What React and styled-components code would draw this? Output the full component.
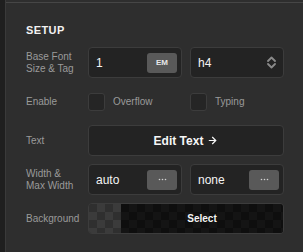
import React from "react"
import styled, { createGlobalStyle } from "styled-components"
import { ArrowRight } from "lucide-react"

const Global = createGlobalStyle`
    body {
        margin: 0;
        background: #1e1e1e;
        font-family: "Liberation Sans", Arial, sans-serif;
    }
`

function Chevrons() {
    return (
        <svg width="9" height="13" viewBox="0 0 9 13" fill="none">
            <path d="M1 5 L4.5 1.5 L8 5" stroke="#8a8a8a" strokeWidth="1.8" strokeLinecap="round" strokeLinejoin="round" />
            <path d="M1 8 L4.5 11.5 L8 8" stroke="#8a8a8a" strokeWidth="1.8" strokeLinecap="round" strokeLinejoin="round" />
        </svg>
    )
}

function Dots() {
    return (
        <svg width="9" height="3" viewBox="0 0 9 3">
            <circle cx="1.5" cy="1.5" r="0.8" fill="#d0d0d0" />
            <circle cx="4.5" cy="1.5" r="0.8" fill="#d0d0d0" />
            <circle cx="7.5" cy="1.5" r="0.8" fill="#d0d0d0" />
        </svg>
    )
}

function App() {
    return (
        <Page>
            <Global />
            <Strip />
            <Panel>
                <Divider />
                <Title>Setup</Title>
                <Grid>
                    <Label>Base Font<br />Size &amp; Tag</Label>
                    <Field>
                        <Value>1</Value>
                        <Pill>EM</Pill>
                    </Field>
                    <Field>
                        <Value>h4</Value>
                        <IconSlot><Chevrons /></IconSlot>
                    </Field>

                    <Label>Enable</Label>
                    <Check>
                        <Box />
                        <span>Overflow</span>
                    </Check>
                    <Check>
                        <Box />
                        <span>Typing</span>
                    </Check>

                    <Label>Text</Label>
                    <WideButton>
                        Edit Text <ArrowRight size={11} strokeWidth={2.6} />
                    </WideButton>

                    <Label>Width &amp;<br />Max Width</Label>
                    <Field>
                        <Value>auto</Value>
                        <Pill><Dots /></Pill>
                    </Field>
                    <Field>
                        <Value>none</Value>
                        <Pill><Dots /></Pill>
                    </Field>

                    <Label>Background</Label>
                    <Swatch>
                        <Checker />
                        <SelectArea>Select</SelectArea>
                    </Swatch>
                </Grid>
            </Panel>
        </Page>
    )
}

export default App

const Page = styled.div`
    display: flex;
    width: 303px;
    height: 252px;
    overflow: hidden;
`

const Strip = styled.div`
    width: 5px;
    flex-shrink: 0;
    background: #1f1f1f;
`

const Panel = styled.div`
    flex: 1;
    background: #2e2e2e;
    border-left: 1px solid #3a3a3a;
    padding: 2px 19px 0 20px;
`

const Divider = styled.div`
    height: 1px;
    background: #464646;
    margin: 0 -19px 0 -20px;
`

const Title = styled.div`
    margin-top: 21px;
    font-size: 11px;
    line-height: 13px;
    font-weight: 700;
    letter-spacing: 0.4px;
    text-transform: uppercase;
    color: #f2f2f2;
`

const Grid = styled.div`
    margin-top: 10px;
    display: grid;
    grid-template-columns: 54px 94px 94px;
    grid-auto-rows: 31px;
    column-gap: 8px;
    row-gap: 8px;
`

const Label = styled.div`
    display: flex;
    align-items: center;
    font-size: 10px;
    line-height: 12px;
    color: #9a9a9a;
    white-space: nowrap;
`

const Field = styled.div`
    display: flex;
    align-items: center;
    justify-content: space-between;
    box-sizing: border-box;
    background: #232323;
    border: 1px solid #3c3c3c;
    border-radius: 4px;
    padding: 0 4px 0 7px;
`

const Value = styled.span`
    font-size: 12px;
    color: #f4f4f4;
`

const Pill = styled.div`
    width: 30px;
    height: 20px;
    border-radius: 3px;
    background: #595959;
    color: #e8e8e8;
    font-size: 8px;
    font-weight: 700;
    display: flex;
    align-items: center;
    justify-content: center;
`

const IconSlot = styled.div`
    display: flex;
    align-items: center;
    padding-right: 3px;
`

const Check = styled.label`
    display: flex;
    align-items: center;
    gap: 8px;
    font-size: 10px;
    color: #9a9a9a;
`

const Box = styled.div`
    width: 17px;
    height: 18px;
    box-sizing: border-box;
    border-radius: 3px;
    background: #252525;
    border: 1px solid #3c3c3c;
`

const WideButton = styled.div`
    grid-column: span 2;
    display: flex;
    align-items: center;
    justify-content: center;
    gap: 4px;
    box-sizing: border-box;
    background: #232323;
    border: 1px solid #3c3c3c;
    border-radius: 4px;
    color: #f6f6f6;
    font-size: 12px;
    font-weight: 700;
`

const Swatch = styled.div`
    grid-column: span 2;
    display: flex;
    box-sizing: border-box;
    border: 1px solid #3c3c3c;
    border-radius: 4px;
    overflow: hidden;
`

const Checker = styled.div`
    width: 32px;
    background-color: #2f2f2f;
    background-image: conic-gradient(#3b3b3b 25%, transparent 0 50%, #3b3b3b 0 75%, transparent 0);
    background-size: 16px 16px;
`

const SelectArea = styled.div`
    flex: 1;
    display: flex;
    align-items: center;
    justify-content: center;
    background-color: #0e0e0e;
    background-image: conic-gradient(#141414 25%, transparent 0 50%, #141414 0 75%, transparent 0);
    background-size: 16px 16px;
    color: #f4f4f4;
    font-size: 10px;
    font-weight: 700;
`
